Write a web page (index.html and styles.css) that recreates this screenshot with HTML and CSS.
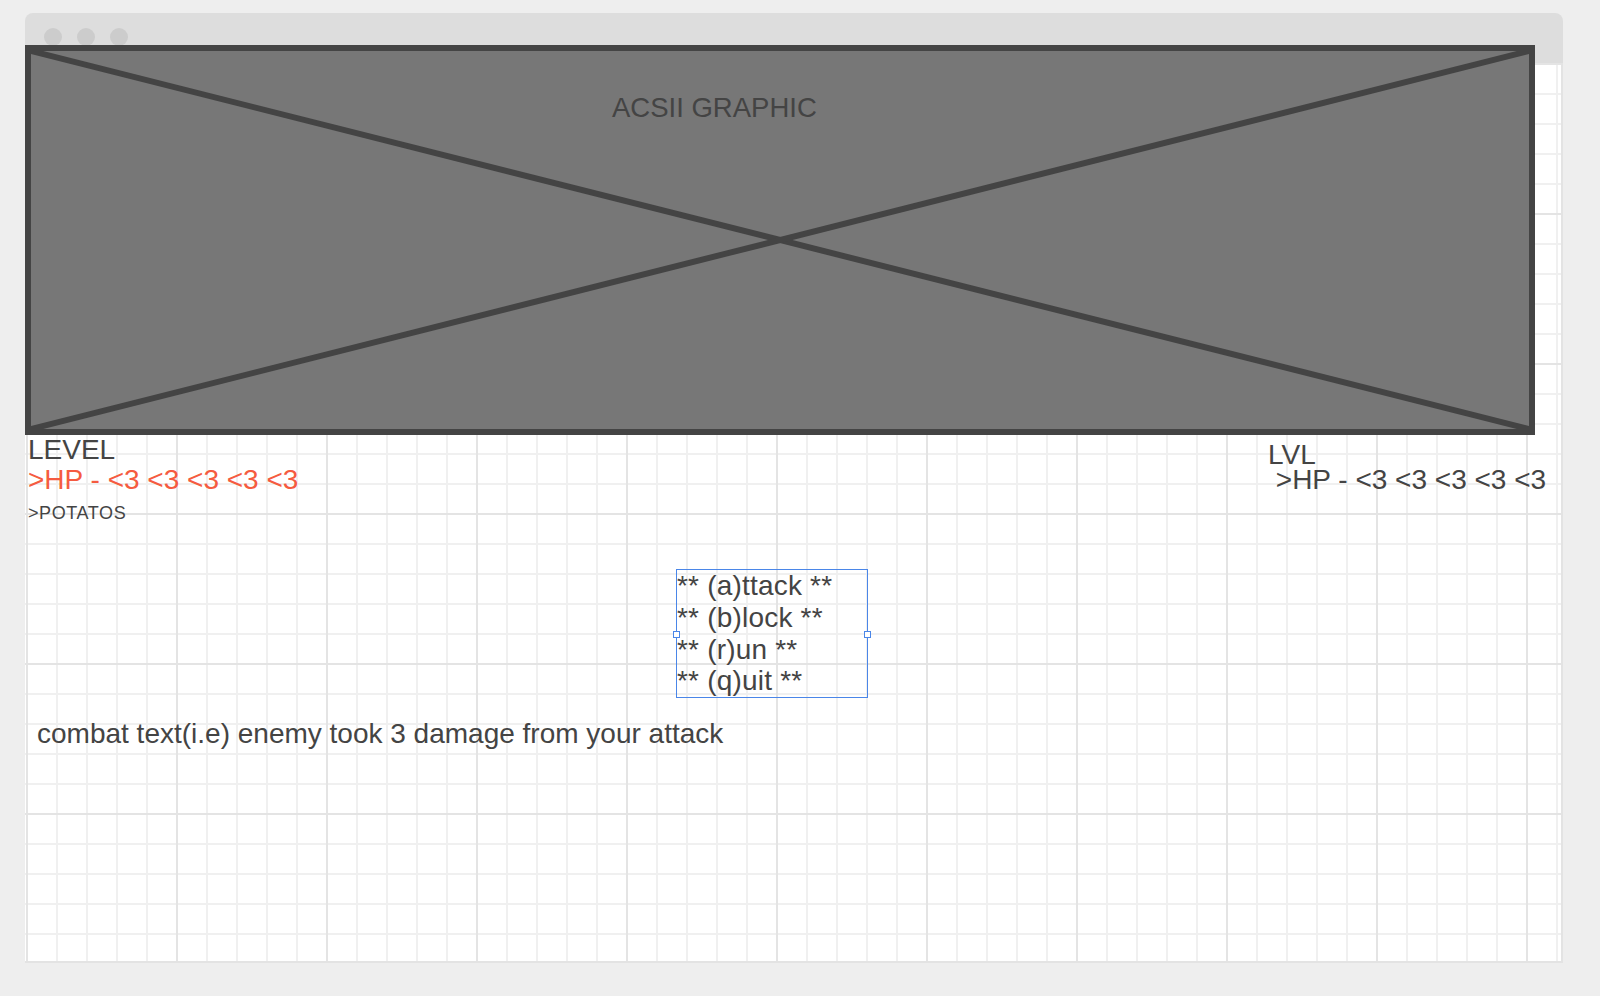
FILE: index.html
```html
<!DOCTYPE html>
<html lang="en">
<head>
<meta charset="utf-8">
<title>Combat wireframe</title>
<link rel="stylesheet" href="styles.css">
</head>
<body>
<div class="window">
  <div class="titlebar">
    <span class="dot"></span><span class="dot"></span><span class="dot"></span>
  </div>
  <div class="canvas">
    <div class="graphic">
      <svg class="cross" aria-hidden="true">
        <line x1="0" y1="0" x2="100%" y2="100%"></line>
        <line x1="0" y1="100%" x2="100%" y2="0"></line>
      </svg>
      <div class="graphic-label">ACSII GRAPHIC</div>
    </div>
    <div class="stats">
      <div class="player">
        <div class="txt level">LEVEL</div>
        <div class="txt hp">&gt;HP - &lt;3 &lt;3 &lt;3 &lt;3 &lt;3</div>
        <div class="potatos">&gt;POTATOS</div>
      </div>
      <div class="enemy">
        <div class="txt lvl">LVL</div>
        <div class="txt ehp">&nbsp;&gt;HP - &lt;3 &lt;3 &lt;3 &lt;3 &lt;3</div>
      </div>
    </div>
    <div class="menu">
      <div class="txt item">** (a)ttack **</div>
      <div class="txt item">** (b)lock **</div>
      <div class="txt item">** (r)un **</div>
      <div class="txt item">** (q)uit **</div>
      <span class="handle handle-left"></span>
      <span class="handle handle-right"></span>
    </div>
    <div class="txt combat">combat text(i.e) enemy took 3 damage from your attack</div>
  </div>
</div>
</body>
</html>
```
FILE: styles.css
```css
* { box-sizing: border-box; }
html, body {
  margin: 0;
  padding: 0;
  background: #eeeeee;
  font-family: "Liberation Sans", Arial, sans-serif;
  color: #444444;
}
.window {
  width: 1538px;
  height: 950px;
  margin: 13px 0 0 25px;
  display: flex;
  flex-direction: column;
}
.titlebar {
  height: 50px;
  flex: none;
  background: #dddddd;
  border-radius: 8px 8px 0 0;
  display: flex;
  align-items: flex-start;
  gap: 15px;
  padding: 15px 0 0 19px;
}
.dot {
  width: 18px;
  height: 18px;
  border-radius: 50%;
  background: #cccccc;
}
.canvas {
  flex: 1;
  display: flex;
  flex-direction: column;
  align-items: flex-start;
  border-right: 2px solid #e3e3e3;
  border-bottom: 2px solid #e3e3e3;
  background-color: #ffffff;
  background-image:
    linear-gradient(to right, #e4e4e4 2px, transparent 2px),
    linear-gradient(to bottom, #e4e4e4 2px, transparent 2px),
    linear-gradient(to right, #f0f0f0 2px, transparent 2px),
    linear-gradient(to bottom, #f0f0f0 2px, transparent 2px);
  background-size: 150px 150px, 150px 150px, 30px 30px, 30px 30px;
  background-position: 1px 0, 0 0, 1px 0, 0 0;
}
.graphic {
  position: relative;
  flex: none;
  width: 1510px;
  height: 390px;
  margin-top: -18px;
  border: 6px solid #444444;
  background: #777777;
  padding: 42px 0 0 581px;
}
.cross {
  position: absolute;
  left: 0;
  top: 0;
  width: 100%;
  height: 100%;
  overflow: hidden;
}
.cross line {
  stroke: #444444;
  stroke-width: 6;
}
.graphic-label {
  position: relative;
  font-size: 27.5px;
  line-height: 30px;
  color: #444444;
}
.txt {
  font-size: 28px;
  line-height: 30px;
  white-space: nowrap;
}
.stats {
  display: grid;
  grid-template-columns: 1240px auto;
  padding-left: 3px;
  width: 100%;
}
.hp { color: #f55b40; }
.potatos {
  font-size: 18px;
  line-height: 30px;
  letter-spacing: 0.6px;
  margin-top: 3px;
}
.enemy { padding-top: 7px; }
.enemy .txt { line-height: 25px; }
.menu {
  position: relative;
  margin: 41px 0 0 651px;
  width: 192px;
  border: 1px solid #4a86e8;
}
.menu .item {
  line-height: 31.75px;
  letter-spacing: 0.2px;
}
.handle {
  position: absolute;
  top: 50%;
  width: 7px;
  height: 7px;
  margin-top: -3px;
  background: #ffffff;
  border: 1px solid #4a86e8;
}
.handle-left { left: -4px; }
.handle-right { right: -4px; }
.combat {
  margin: 21px 0 0 12px;
}
```
